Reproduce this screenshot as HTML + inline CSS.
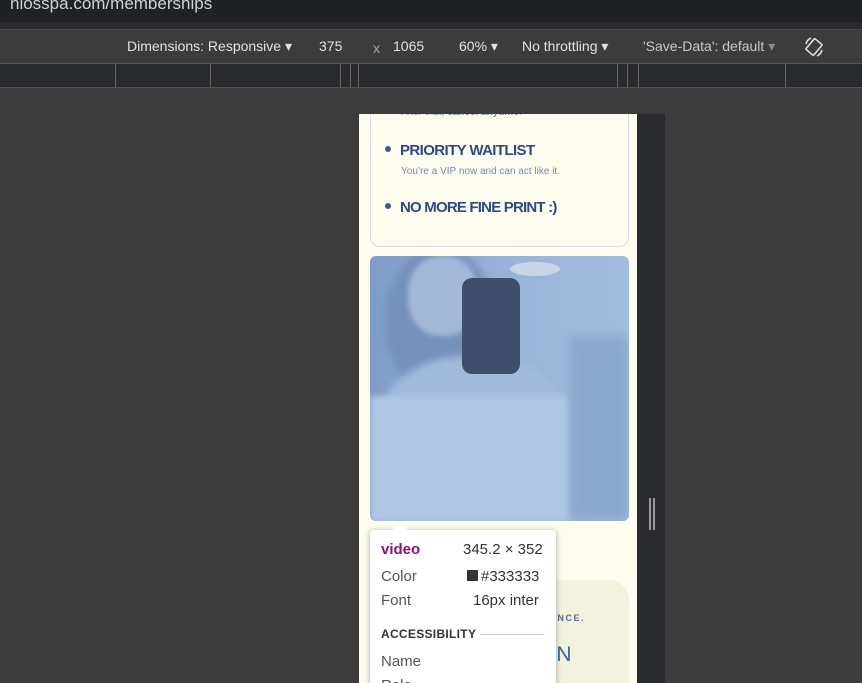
<!DOCTYPE html>
<html><head><style>
*{margin:0;padding:0;box-sizing:border-box}
html,body{width:862px;height:683px;overflow:hidden}
body{background:#3c3c3c;position:relative;font-family:"Liberation Sans",sans-serif}
.abs{position:absolute}
</style></head><body>
<div class="abs" style="left:0;top:0;width:862px;height:22px;background:#202124"></div>
<div class="abs" style="left:10px;top:-6px;color:#cfd2d6;font-size:17px">nlosspa.com/memberships</div>
<div class="abs" style="left:0;top:22px;width:862px;height:8px;background:#292a2d"></div>
<div class="abs" style="left:0;top:29px;width:862px;height:1px;background:#4a4a4a"></div>
<div class="abs" style="left:0;top:30px;width:862px;height:33px;background:#3c3c3c;color:#e3e3e3;font-size:14px">
 <span class="abs" style="left:127px;top:8px">Dimensions: Responsive ▾</span>
 <span class="abs" style="left:319px;top:8px">375</span>
 <span class="abs" style="left:373px;top:10px;color:#aaa">x</span>
 <span class="abs" style="left:393px;top:8px">1065</span>
 <span class="abs" style="left:459px;top:8px">60% ▾</span>
 <span class="abs" style="left:522px;top:8px">No throttling ▾</span>
 <span class="abs" style="left:643px;top:8px;color:#c8c8c8">'Save-Data': default <span style="color:#888">▾</span></span>
 <svg class="abs" style="left:803px;top:5px" width="22" height="24" viewBox="0 0 22 24"><g fill="none" stroke="#ddd" stroke-width="1.6"><rect x="6" y="5" width="10" height="14" rx="1" transform="rotate(40 11 12)"/><path d="M3 9a9 9 0 0 1 5-6M19 15a9 9 0 0 1-5 6"/></g></svg>
</div>
<div class="abs" style="left:0;top:63px;width:862px;height:1px;background:#555"></div>
<div class="abs" style="left:0;top:64px;width:862px;height:23px;background:#292a2d"></div>
<div class="abs" style="left:0;top:87px;width:862px;height:1px;background:#555"></div>
<div class="abs" style="top:64px;height:23px;left:115px;width:1px;background:#666"></div>
<div class="abs" style="top:64px;height:23px;left:210px;width:1px;background:#666"></div>
<div class="abs" style="top:64px;height:23px;left:340px;width:1px;background:#666"></div>
<div class="abs" style="top:64px;height:23px;left:350px;width:1px;background:#666"></div>
<div class="abs" style="top:64px;height:23px;left:358px;width:1px;background:#666"></div>
<div class="abs" style="top:64px;height:23px;left:617px;width:1px;background:#666"></div>
<div class="abs" style="top:64px;height:23px;left:627px;width:1px;background:#666"></div>
<div class="abs" style="top:64px;height:23px;left:638px;width:1px;background:#666"></div>
<div class="abs" style="top:64px;height:23px;left:785px;width:1px;background:#666"></div>

<div class="abs" style="left:637px;top:114px;width:28px;height:569px;background:#292a2d"></div>
<div class="abs" style="left:649px;top:498px;width:2px;height:32px;background:#999"></div>
<div class="abs" style="left:653px;top:498px;width:2px;height:32px;background:#999"></div>

<div class="abs" style="left:359px;top:114px;width:278px;height:569px;background:#fdfcef;overflow:hidden">
 <div class="abs" style="left:11px;top:-20px;width:259px;height:153px;border:1px solid #d8dbe0;border-radius:10px"></div>
 <div class="abs" style="left:42px;top:-7px;font-size:10px;color:#7a8aa8">After that, <b>cancel anytime</b>.</div>
 <div class="abs" style="left:26px;top:32px;width:6px;height:6px;border-radius:50%;background:#3d5a99"></div>
 <div class="abs" style="left:41px;top:28px;font-size:15px;font-weight:bold;color:#2d4a85;letter-spacing:-0.6px">PRIORITY WAITLIST</div>
 <div class="abs" style="left:42px;top:52px;font-size:10px;color:#7a8aa8">You’re a VIP now and can act like it.</div>
 <div class="abs" style="left:26px;top:89px;width:6px;height:6px;border-radius:50%;background:#3d5a99"></div>
 <div class="abs" style="left:41px;top:85px;font-size:15px;font-weight:bold;color:#2d4a85;letter-spacing:-0.8px">NO MORE FINE PRINT :)</div>

 <div class="abs" style="left:11px;top:142px;width:259px;height:265px;border-radius:6px;overflow:hidden;background:linear-gradient(90deg,#7f9cc6,#95b0d6 40%,#a3bde0)">
  <div class="abs" style="left:15px;top:-10px;width:110px;height:150px;border-radius:50%;background:#7590bb;filter:blur(4px)"></div>
  <div class="abs" style="left:38px;top:0;width:70px;height:80px;border-radius:45%;background:#a4b9da;filter:blur(3px)"></div>
  <div class="abs" style="left:5px;top:100px;width:200px;height:170px;border-radius:45% 45% 0 0;background:#a2badd;filter:blur(4px)"></div>
  <div class="abs" style="left:0;top:140px;width:200px;height:125px;background:#b0c6e5;filter:blur(3px)"></div>
  <div class="abs" style="left:92px;top:22px;width:58px;height:96px;border-radius:10px;background:#3f4f6b"></div>
  <div class="abs" style="left:200px;top:80px;width:59px;height:185px;background:#8ca7ce;filter:blur(5px)"></div>
  <div class="abs" style="left:140px;top:6px;width:50px;height:14px;border-radius:50%;background:#c9d6ea"></div>
 </div>

 <div class="abs" style="left:83px;top:466px;width:187px;height:110px;border-radius:20px 20px 0 0;background:#f3f2df"></div>
 <div class="abs" style="left:183px;top:499px;font-size:9px;color:#5b6b8a;letter-spacing:1.5px;font-weight:bold">DENCE.</div>
 <div class="abs" style="left:181px;top:529px;font-size:21px;color:#3b63a8">ON</div>
</div>

<div class="abs" style="left:370px;top:530px;width:186px;height:160px;background:#fff;border-radius:4px;box-shadow:0 1px 6px rgba(0,0,0,.35)"></div>
<div class="abs" style="left:392px;top:522px;width:0;height:0;border-left:8px solid transparent;border-right:8px solid transparent;border-bottom:8px solid #fff"></div>
<div class="abs" style="left:381px;top:541px;font-size:15px;font-weight:bold;color:#881280">video</div>
<div class="abs" style="left:463px;top:541px;font-size:15px;color:#333">345.2 × 352</div>
<div class="abs" style="left:381px;top:568px;font-size:15px;color:#555">Color</div>
<div class="abs" style="left:467px;top:570px;width:11px;height:11px;background:#333"></div>
<div class="abs" style="left:481px;top:568px;font-size:15px;color:#333">#333333</div>
<div class="abs" style="left:381px;top:592px;font-size:15px;color:#555">Font</div>
<div class="abs" style="left:473px;top:592px;font-size:15px;color:#333">16px inter</div>
<div class="abs" style="left:381px;top:627px;font-size:12px;color:#333;font-weight:bold;letter-spacing:.3px">ACCESSIBILITY</div>
<div class="abs" style="left:480px;top:634px;width:64px;height:1px;background:#ccc"></div>
<div class="abs" style="left:381px;top:653px;font-size:15px;color:#555">Name</div>
<div class="abs" style="left:381px;top:677px;font-size:15px;color:#555">Role</div>
</body></html>
